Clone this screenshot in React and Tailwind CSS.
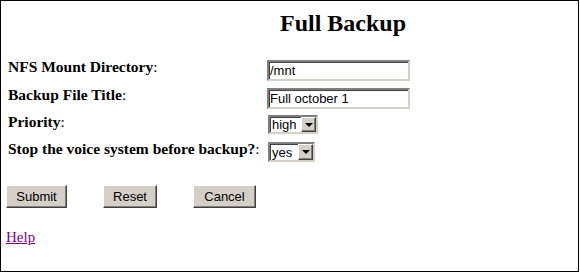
import React from "react";

const serif = { fontFamily: '"Liberation Serif", "Times New Roman", serif' };
const sans = { fontFamily: '"Liberation Sans", Arial, sans-serif' };

function Label({ children }) {
  return (
    <div className="w-[259px] shrink-0 whitespace-nowrap ml-[2px] text-[15.5px] leading-[16px] text-black -mt-[1px]" style={serif}>
      <span className="font-bold">{children}</span>:
    </div>
  );
}

function TextBox({ value }) {
  return (
    <input
      readOnly
      defaultValue={value}
      className="w-[143px] h-[21px] bg-white text-[13px] text-black px-[1px] border-2 border-t-[#808080] border-l-[#808080] border-b-[#d4d0c8] border-r-[#d4d0c8] shadow-[inset_1px_1px_0_#404040] outline-none"
      style={sans}
    />
  );
}

function Select({ value, width, height }) {
  return (
    <div
      className={`flex ml-[1px] bg-white border-2 border-t-[#808080] border-l-[#808080] border-b-[#d4d0c8] border-r-[#d4d0c8] shadow-[inset_1px_1px_0_#404040] ${width} ${height}`}
    >
      <div className="flex-1 flex items-center pl-[2px] text-[13px] text-black leading-none" style={sans}>
        {value}
      </div>
      <div className="w-[15px] self-stretch flex items-center justify-center bg-[#d4d0c8] border border-t-[#ffffff] border-l-[#ffffff] border-b-[#404040] border-r-[#404040] shadow-[inset_-1px_-1px_0_#808080]">
        <div className="w-0 h-0 border-l-[4px] border-r-[4px] border-t-[4px] border-l-transparent border-r-transparent border-t-black" />
      </div>
    </div>
  );
}

function Btn({ children, width }) {
  return (
    <button
      className={`${width} h-[23px] bg-[#d4d0c8] text-[13px] text-black border border-t-white border-l-white border-b-[#404040] border-r-[#404040] shadow-[inset_-1px_-1px_0_#808080] flex items-center justify-center`}
      style={sans}
    >
      {children}
    </button>
  );
}

export default function App() {
  return (
    <div className="w-[579px] h-[272px] border border-black bg-white flex flex-col pl-[5px]">
      <div
        className="mt-[10px] ml-[274px] text-[24px] leading-[24px] font-bold text-black"
        style={serif}
      >
        Full Backup
      </div>

      <div className="mt-[25px] flex flex-col">
        <div className="flex items-start h-[21px]">
          <Label>NFS Mount Directory</Label>
          <TextBox value="/mnt" />
        </div>
        <div className="flex items-start h-[21px] mt-[7px]">
          <Label>Backup File Title</Label>
          <TextBox value="Full october 1" />
        </div>
        <div className="flex items-start h-[19px] mt-[6px]">
          <Label>Priority</Label>
          <Select value="high" width="w-[50px]" height="h-[19px]" />
        </div>
        <div className="flex items-start h-[20px] mt-[8px]">
          <Label>Stop the voice system before backup?</Label>
          <Select value="yes" width="w-[47px]" height="h-[20px]" />
        </div>
      </div>

      <div className="mt-[23px] flex gap-[36px]">
        <Btn width="w-[61px]">Submit</Btn>
        <Btn width="w-[54px]">Reset</Btn>
        <Btn width="w-[63px]">Cancel</Btn>
      </div>

      <div className="mt-[21px] text-[15px] leading-[16px]" style={serif}>
        <a href="#" className="text-[#800080] underline">Help</a>
      </div>
    </div>
  );
}
